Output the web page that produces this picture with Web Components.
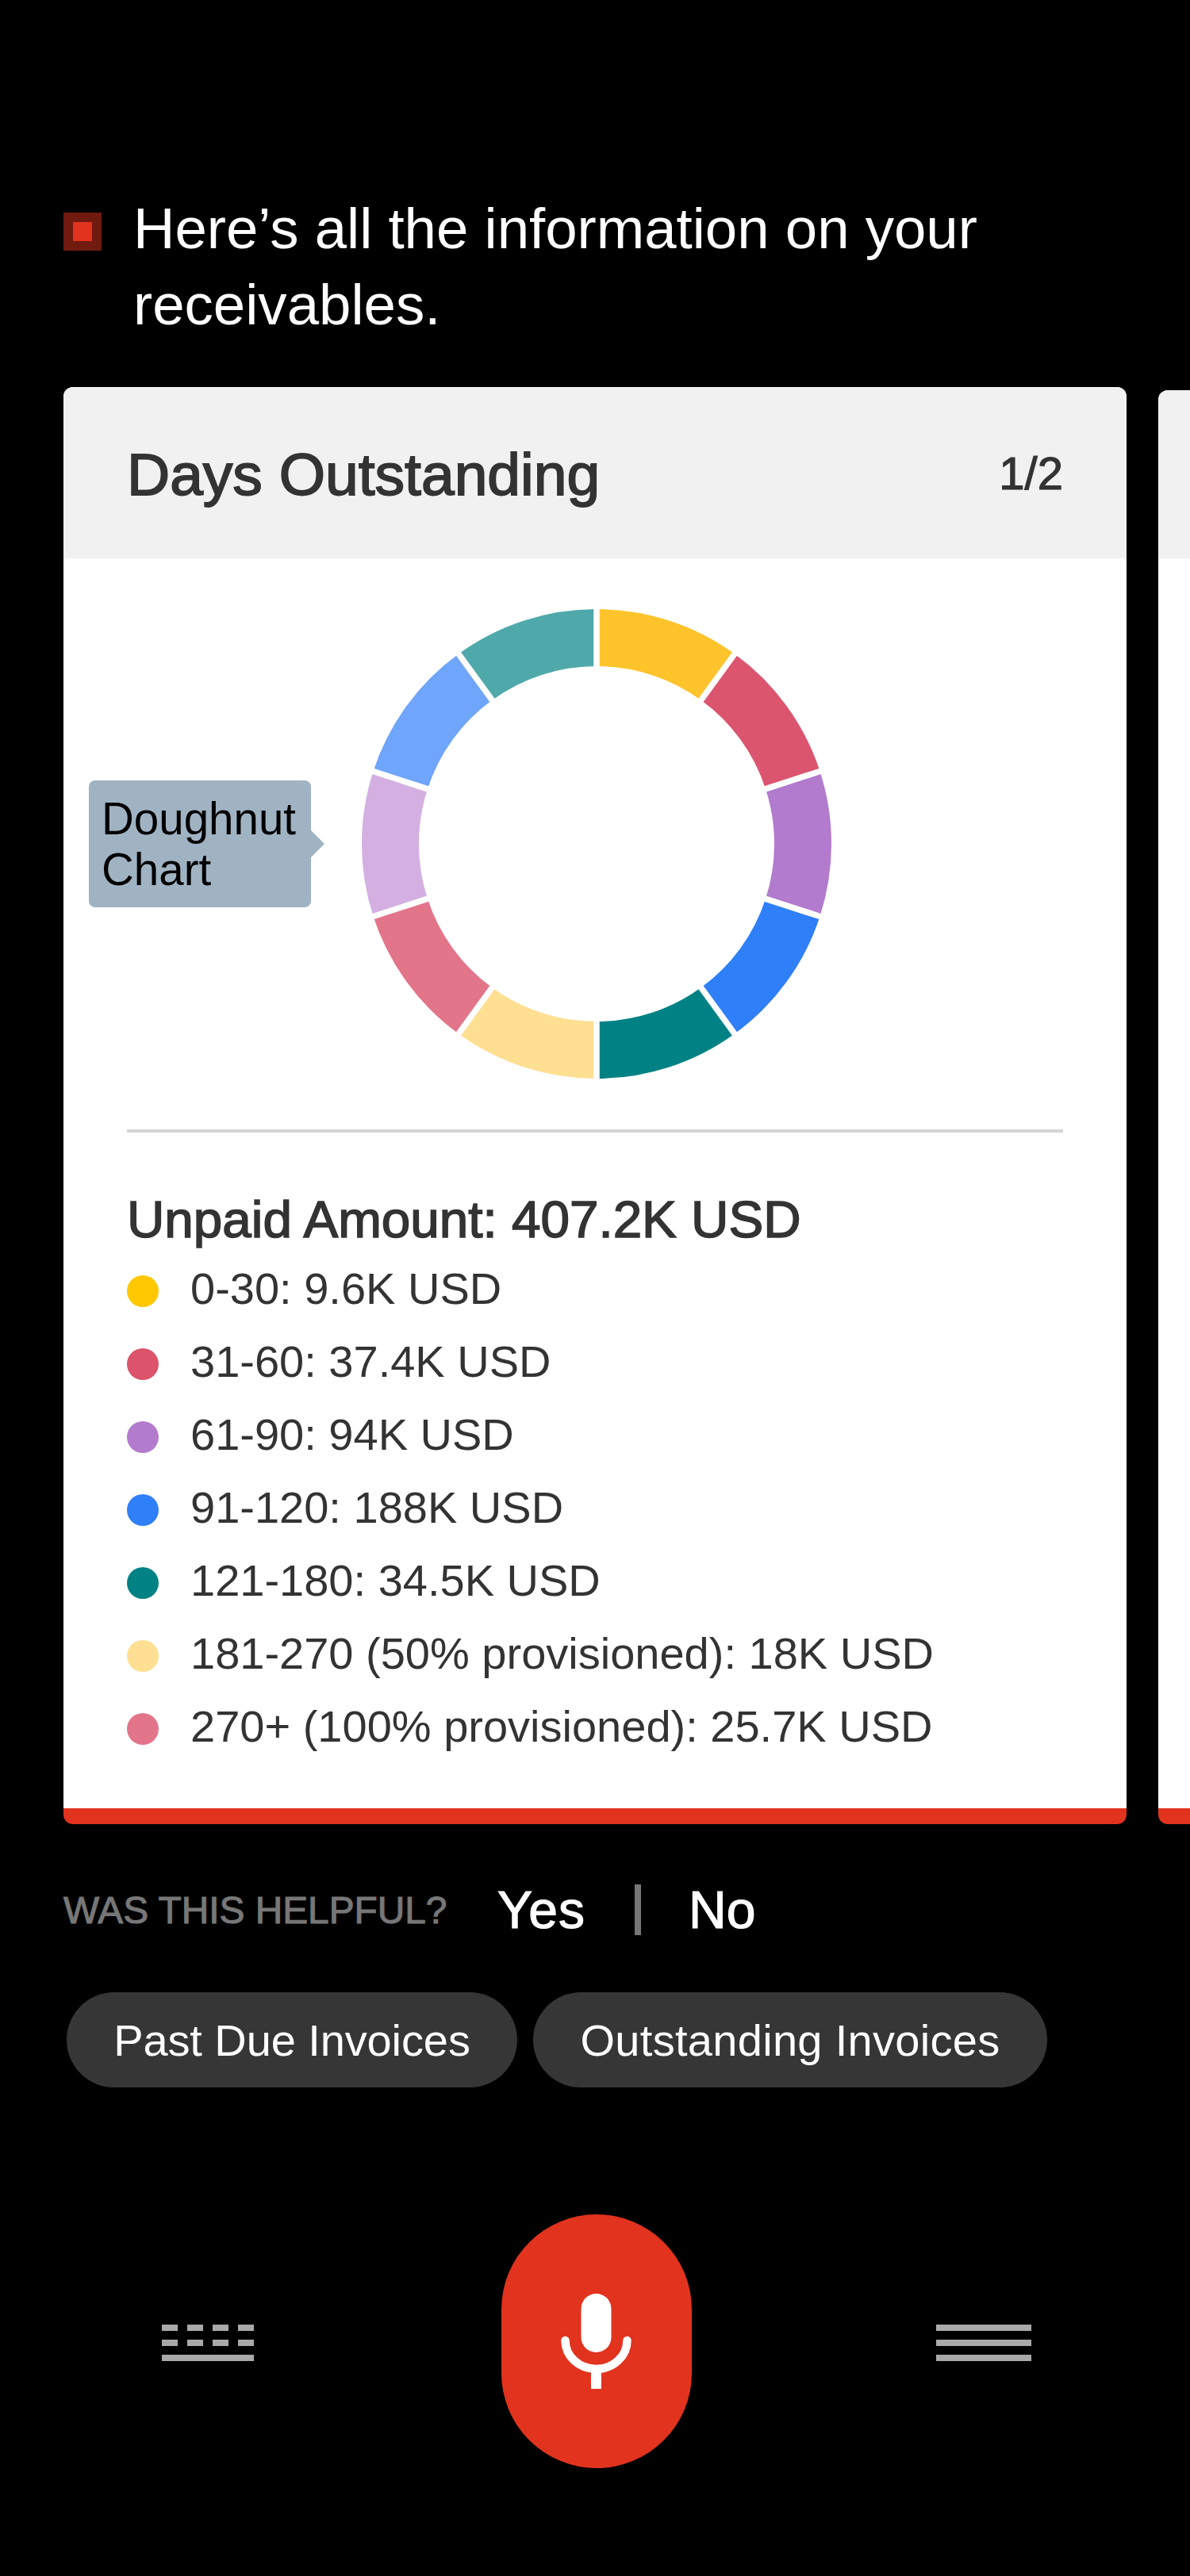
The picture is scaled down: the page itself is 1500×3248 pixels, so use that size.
<!DOCTYPE html>
<html>
<head>
<meta charset="utf-8">
<style>
  html, body { margin: 0; background: #000; }
  body { font-family: "Liberation Sans", Arial, sans-serif; }
</style>
</head>
<body>
<va-screen>
  <va-message>Here’s all the information on your receivables.</va-message>
  <va-carousel>
    <va-card heading="Days Outstanding" page="1/2">
      <va-doughnut></va-doughnut>
      <va-legend total="Unpaid Amount: 407.2K USD">
        <va-legend-row color="#ffc800">0-30: 9.6K USD</va-legend-row>
        <va-legend-row color="#dc546c">31-60: 37.4K USD</va-legend-row>
        <va-legend-row color="#b27bcd">61-90: 94K USD</va-legend-row>
        <va-legend-row color="#2f7ff8">91-120: 188K USD</va-legend-row>
        <va-legend-row color="#008285">121-180: 34.5K USD</va-legend-row>
        <va-legend-row color="#ffdf91">181-270 (50% provisioned): 18K USD</va-legend-row>
        <va-legend-row color="#e3758a">270+ (100% provisioned): 25.7K USD</va-legend-row>
      </va-legend>
    </va-card>
    <va-card peek></va-card>
  </va-carousel>
  <va-feedback></va-feedback>
  <va-chips>
    <va-chip style="--w: 568px; --track: -0.1px">Past Due Invoices</va-chip>
    <va-chip style="--w: 648px; --track: 0.3px">Outstanding Invoices</va-chip>
  </va-chips>
  <va-bottom-bar></va-bottom-bar>
</va-screen>

<script>
class VaScreen extends HTMLElement {
  constructor() {
    super();
    this.attachShadow({ mode: 'open' });
    this.shadowRoot.innerHTML = `
      <style>
        :host {
          display: block;
          width: 1500px;
          height: 3248px;
          overflow: hidden;
          background: #000;
          padding-top: 238px;
          box-sizing: border-box;
          font-family: "Liberation Sans", Arial, sans-serif;
        }
      </style>
      <slot></slot>
    `;
  }
}

class VaMessage extends HTMLElement {
  constructor() {
    super();
    this.attachShadow({ mode: 'open' });
    this.shadowRoot.innerHTML = `
      <style>
        :host {
          display: flex;
          padding-left: 80px;
          width: 1240px;
          color: #fff;
          font-size: 72.6px;
          line-height: 96px;
        }
        .mark {
          flex: none;
          box-sizing: border-box;
          width: 48px;
          height: 48px;
          margin: 30px 40px 0 0;
          background: #e1331e;
          border: 12px solid #701a10;
        }
        .text { margin-top: 2px; }
      </style>
      <div class="mark"></div>
      <div class="text"><slot></slot></div>
    `;
  }
}

class VaCarousel extends HTMLElement {
  constructor() {
    super();
    this.attachShadow({ mode: 'open' });
    this.shadowRoot.innerHTML = `
      <style>
        :host {
          display: flex;
          align-items: flex-end;
          gap: 40px;
          margin-top: 56px;
          padding-left: 80px;
        }
      </style>
      <slot></slot>
    `;
  }
}

class VaCard extends HTMLElement {
  constructor() {
    super();
    this.attachShadow({ mode: 'open' });
    this.shadowRoot.innerHTML = `
      <style>
        :host {
          display: block;
          flex: none;
          width: 1340px;
          height: 1812px;
          box-sizing: border-box;
          background: #fff;
          border-radius: 12px;
          border-bottom: 20px solid #e1331e;
          overflow: hidden;
          color: #333;
        }
        :host([peek]) { height: 1808px; width: 200px; }
        header {
          display: flex;
          align-items: center;
          justify-content: space-between;
          box-sizing: border-box;
          height: 216px;
          padding: 0 80px;
          background: #f1f1f1;
        }
        :host([peek]) header { height: 212px; }
        h2 {
          margin: 4px 0 0;
          font-size: 75px;
          font-weight: 400;
          line-height: 80px;
          -webkit-text-stroke: 1.8px #333;
        }
        .page {
          font-size: 58px;
          -webkit-text-stroke: 1.2px #333;
        }
      </style>
      <header><h2></h2><span class="page"></span></header>
      <slot></slot>
    `;
  }

  connectedCallback() {
    this.shadowRoot.querySelector('h2').textContent = this.getAttribute('heading') || '';
    this.shadowRoot.querySelector('.page').textContent = this.getAttribute('page') || '';
  }
}

class VaDoughnut extends HTMLElement {
  constructor() {
    super();
    this.attachShadow({ mode: 'open' });
    // clockwise from 12 o'clock
    const colors = ['#ffc32b', '#dc556f', '#b27bcd', '#2f7ff8', '#008285',
      '#ffdf91', '#e3758a', '#d4b0e2', '#6fa5fa', '#4fa9ab'];
    const R = 296;
    const r = 224;
    const pt = (rad, deg) => {
      const a = (deg * Math.PI) / 180;
      return `${(rad * Math.sin(a)).toFixed(2)} ${(-rad * Math.cos(a)).toFixed(2)}`;
    };
    let parts = '';
    colors.forEach((c, i) => {
      const a = i * 36;
      const b = a + 36;
      parts += `<path fill="${c}" d="M${pt(R, a)} A${R} ${R} 0 0 1 ${pt(R, b)} L${pt(r, b)} A${r} ${r} 0 0 0 ${pt(r, a)} Z"/>`;
    });
    for (let i = 0; i < 5; i++) {
      const a = i * 36;
      parts += `<path stroke="#fff" stroke-width="7.5" d="M${pt(R + 4, a)} L${pt(-R - 4, a)}"/>`;
    }
    this.shadowRoot.innerHTML = `
      <style>
        :host {
          display: block;
          position: relative;
          padding-top: 64px;
          height: 592px;
        }
        svg {
          display: block;
          width: 600px;
          height: 592px;
          margin-left: 372px;
        }
        .tip {
          position: absolute;
          left: 32px;
          top: 280px;
          box-sizing: border-box;
          width: 280px;
          height: 160px;
          padding: 17px 16px;
          background: #a0b3c3;
          border-radius: 8px;
          color: #000;
          font-size: 56.5px;
          line-height: 64px;
        }
        .tip::after {
          content: '';
          position: absolute;
          right: -17px;
          top: 63px;
          border-left: 17px solid #a0b3c3;
          border-top: 17px solid transparent;
          border-bottom: 17px solid transparent;
        }
      </style>
      <svg viewBox="-300 -296 600 592">${parts}</svg>
      <div class="tip">Doughnut Chart</div>
    `;
  }
}

class VaLegend extends HTMLElement {
  constructor() {
    super();
    this.attachShadow({ mode: 'open' });
    this.shadowRoot.innerHTML = `
      <style>
        :host { display: block; margin: 64px 80px 0; }
        .rule { height: 4px; background: #d4d4d4; }
        .total {
          margin-top: 70px;
          color: #333;
          font-size: 65.6px;
          line-height: 80px;
          -webkit-text-stroke: 1.6px #333;
        }
      </style>
      <div class="rule"></div>
      <div class="total"></div>
      <slot></slot>
    `;
  }

  connectedCallback() {
    this.shadowRoot.querySelector('.total').textContent = this.getAttribute('total');
  }
}

class VaLegendRow extends HTMLElement {
  constructor() {
    super();
    this.attachShadow({ mode: 'open' });
    this.shadowRoot.innerHTML = `
      <style>
        :host {
          display: flex;
          align-items: center;
          gap: 40px;
          height: 92px;
          color: #333;
          font-size: 56px;
        }
        .dot {
          width: 40px;
          height: 40px;
          margin-top: 7px;
          border-radius: 50%;
        }
      </style>
      <span class="dot"></span>
      <span><slot></slot></span>
    `;
  }

  connectedCallback() {
    this.shadowRoot.querySelector('.dot').style.background = this.getAttribute('color');
  }
}

class VaFeedback extends HTMLElement {
  constructor() {
    super();
    this.attachShadow({ mode: 'open' });
    this.shadowRoot.innerHTML = `
      <style>
        :host {
          display: flex;
          align-items: center;
          height: 64px;
          margin-top: 76px;
          padding-left: 80px;
          color: #fff;
          font-size: 66px;
          -webkit-text-stroke: 1.2px #fff;
        }
        .ask {
          width: 547px;
          color: #777;
          font-size: 47.8px;
          -webkit-text-stroke: 1.1px #777;
        }
        .sep {
          width: 8px;
          height: 64px;
          margin: 0 60px 0 64px;
          background: #777;
        }
        .yes { width: 109px; letter-spacing: 1.2px; }
      </style>
      <span class="ask">WAS THIS HELPFUL?</span>
      <span class="yes">Yes</span>
      <span class="sep"></span>
      <span>No</span>
    `;
  }
}

class VaChips extends HTMLElement {
  constructor() {
    super();
    this.attachShadow({ mode: 'open' });
    this.shadowRoot.innerHTML = `
      <style>
        :host {
          display: flex;
          gap: 20px;
          margin-top: 72px;
          padding-left: 84px;
        }
      </style>
      <slot></slot>
    `;
  }
}

class VaChip extends HTMLElement {
  constructor() {
    super();
    this.attachShadow({ mode: 'open' });
    this.shadowRoot.innerHTML = `
      <style>
        :host {
          display: flex;
          align-items: center;
          justify-content: center;
          width: var(--w);
          height: 120px;
          border-radius: 60px;
          background: #363636;
          color: #fff;
          font-size: 56px;
          letter-spacing: var(--track, 0);
        }
      </style>
      <slot></slot>
    `;
  }
}

class VaBottomBar extends HTMLElement {
  constructor() {
    super();
    this.attachShadow({ mode: 'open' });
    this.shadowRoot.innerHTML = `
      <style>
        :host {
          display: flex;
          align-items: center;
          margin-top: 160px;
          padding-left: 204px;
        }
        .keys { width: 116px; height: 46px; margin: 4px 312px 0 0; display: block; }
        .menu { width: 120px; height: 46px; margin: 4px 0 0 308px; display: block; }
        .mic {
          display: flex;
          align-items: center;
          justify-content: center;
          width: 240px;
          height: 320px;
          border-radius: 120px;
          background: #e1331e;
        }
        .mic svg { width: 90px; height: 120px; display: block; }
      </style>
      <svg class="keys" viewBox="0 0 116 46" fill="#a9a9a9" shape-rendering="crispEdges">
        <rect x="0" y="0" width="20" height="8"/><rect x="32" y="0" width="20" height="8"/><rect x="64" y="0" width="20" height="8"/><rect x="96" y="0" width="20" height="8"/>
        <rect x="0" y="19" width="20" height="8"/><rect x="32" y="19" width="20" height="8"/><rect x="64" y="19" width="20" height="8"/><rect x="96" y="19" width="20" height="8"/>
        <rect x="0" y="38" width="116" height="8"/>
      </svg>
      <div class="mic">
        <svg viewBox="0 0 90 120" fill="none">
          <rect x="25.5" y="0" width="38" height="74" rx="19" fill="#fff"/>
          <path d="M5.5 59 A39 36 0 0 0 83.5 59" stroke="#fff" stroke-width="10.5" stroke-linecap="round"/>
          <rect x="38" y="95" width="13" height="25" fill="#fff"/>
        </svg>
      </div>
      <svg class="menu" viewBox="0 0 120 46" fill="#a9a9a9" shape-rendering="crispEdges">
        <rect x="0" y="0" width="120" height="8"/>
        <rect x="0" y="19" width="120" height="8"/>
        <rect x="0" y="38" width="120" height="8"/>
      </svg>
    `;
  }
}

customElements.define('va-screen', VaScreen);
customElements.define('va-message', VaMessage);
customElements.define('va-carousel', VaCarousel);
customElements.define('va-card', VaCard);
customElements.define('va-doughnut', VaDoughnut);
customElements.define('va-legend', VaLegend);
customElements.define('va-legend-row', VaLegendRow);
customElements.define('va-feedback', VaFeedback);
customElements.define('va-chips', VaChips);
customElements.define('va-chip', VaChip);
customElements.define('va-bottom-bar', VaBottomBar);
</script>
</body>
</html>
